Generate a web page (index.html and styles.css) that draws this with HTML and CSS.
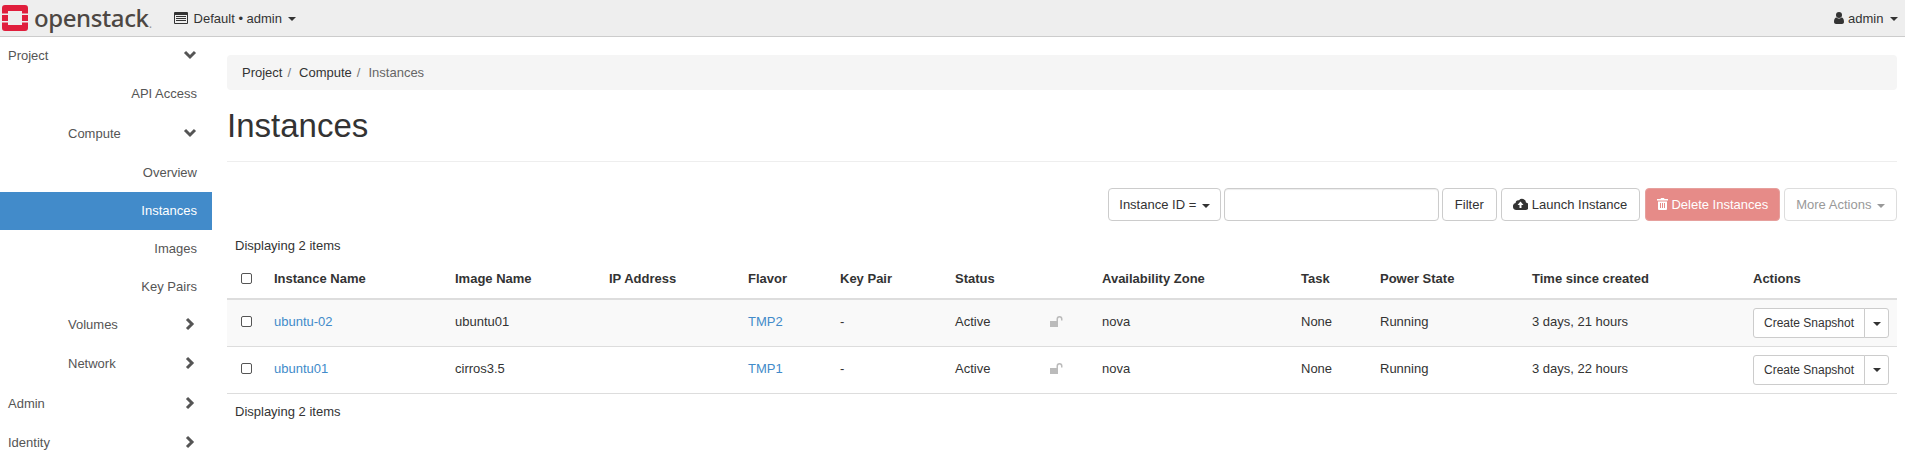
FILE: index.html
```html
<!DOCTYPE html>
<html lang="en">
<head>
    <meta charset="UTF-8">
    <title>Instances - OpenStack Dashboard</title>
    <link rel="stylesheet" href="styles.css">
</head>
<body>
    <header class="topbar">
        <a class="brand" href="#">
            <svg class="brand-mark" viewBox="0 0 26 26" width="26" height="26">
                <path fill="#e01e3c" d="M3 0h20a3 3 0 0 1 3 3v5.500h-6V6H6v2.500H0V3a3 3 0 0 1 3-3zM0 17.500h6V20h14v-2.500h6V23a3 3 0 0 1-3 3H3a3 3 0 0 1-3-3z"/>
                <rect fill="#e01e3c" x="0" y="10" width="6" height="6"/>
                <rect fill="#e01e3c" x="20" y="10" width="6" height="6"/>
            </svg>
            <span class="brand-name">openstack</span><span class="brand-dot">.</span>
        </a>
        <a class="context" href="#">
            <svg class="icon" viewBox="0 0 14 12" width="14" height="12">
                <path fill="#333" fill-rule="evenodd" d="M1 0h12a1 1 0 0 1 1 1v10a1 1 0 0 1-1 1H1a1 1 0 0 1-1-1V1a1 1 0 0 1 1-1zm0 3v8h12V3zm1 1h10v1H2zm0 2h10v1H2zm0 2h10v1H2z"/>
            </svg>
            Default &bull; admin <span class="caret"></span>
        </a>
        <a class="user" href="#">
            <svg class="icon" viewBox="0 0 10 12" width="10" height="12">
                <circle fill="#333" cx="5" cy="3" r="3"/>
                <path fill="#333" d="M0 10c0-3 1-4.500 2.500-4.500C3 6 4 6.500 5 6.500S7 6 7.500 5.500C9 5.500 10 7 10 10c0 1.300-1 2-2 2H2c-1 0-2-.7-2-2z"/>
            </svg>
            admin <span class="caret"></span>
        </a>
    </header>

    <div class="layout">
        <nav class="sidebar">
            <a class="nav-row nav-top nav-first" href="#"><span>Project</span><svg class="chev" viewBox="0 0 14 10" width="14" height="10"><path d="M2 2l5 5 5-5"/></svg></a>
            <a class="nav-row nav-leaf" href="#">API Access</a>
            <a class="nav-row nav-group nav-tall" href="#"><span>Compute</span><svg class="chev" viewBox="0 0 14 10" width="14" height="10"><path d="M2 2l5 5 5-5"/></svg></a>
            <a class="nav-row nav-leaf" href="#">Overview</a>
            <a class="nav-row nav-leaf nav-short active" href="#">Instances</a>
            <a class="nav-row nav-leaf nav-short" href="#">Images</a>
            <a class="nav-row nav-leaf nav-short" href="#">Key Pairs</a>
            <a class="nav-row nav-group nav-short" href="#"><span>Volumes</span><svg class="chev" viewBox="0 0 14 14" width="14" height="14"><path d="M4 2l5 5-5 5"/></svg></a>
            <a class="nav-row nav-group" href="#"><span>Network</span><svg class="chev" viewBox="0 0 14 14" width="14" height="14"><path d="M4 2l5 5-5 5"/></svg></a>
            <a class="nav-row nav-top nav-tall" href="#"><span>Admin</span><svg class="chev" viewBox="0 0 14 14" width="14" height="14"><path d="M4 2l5 5-5 5"/></svg></a>
            <a class="nav-row nav-top" href="#"><span>Identity</span><svg class="chev" viewBox="0 0 14 14" width="14" height="14"><path d="M4 2l5 5-5 5"/></svg></a>
        </nav>

        <main class="content">
            <ol class="breadcrumb">
                <li><a href="#">Project</a></li>
                <li><a href="#">Compute</a></li>
                <li class="current">Instances</li>
            </ol>

            <h1 class="page-title">Instances</h1>

            <div class="toolbar">
                <button class="btn" type="button">Instance ID = <span class="caret"></span></button>
                <input class="filter-input" type="text">
                <button class="btn btn-filter" type="button">Filter</button>
                <button class="btn btn-launch" type="button">
                    <svg class="icon" viewBox="0 0 15 12" width="15" height="12">
                        <path fill="#333" fill-rule="evenodd" d="M3.500 12A3.500 3.500 0 0 1 2.600 5.100 3 3 0 0 1 6 2.200 4 4 0 0 1 13 4.500a3.800 3.800 0 0 1-1 7.500zM7.500 3.500L4.500 7H6.500v3h2V7h2z"/>
                    </svg>
                    Launch Instance
                </button>
                <button class="btn btn-danger" type="button">
                    <svg class="icon" viewBox="0 0 11 12" width="11" height="12">
                        <path fill="#fff" fill-rule="evenodd" d="M3.500 1l.5-1h3l.5 1H11v1.500H0V1zM1 3.500h9V11a1 1 0 0 1-1 1H2a1 1 0 0 1-1-1zM3 5v5h1V5zm2 0v5h1V5zm2 0v5h1V5z"/>
                    </svg>
                    Delete Instances
                </button>
                <button class="btn btn-muted" type="button">More Actions <span class="caret"></span></button>
            </div>

            <p class="count count-top">Displaying 2 items</p>

            <table class="instances">
                <colgroup>
                    <col class="c-check"><col class="c-name"><col class="c-image"><col class="c-ip">
                    <col class="c-flavor"><col class="c-key"><col class="c-status"><col class="c-lock">
                    <col class="c-zone"><col class="c-task"><col class="c-power"><col class="c-time"><col class="c-actions">
                </colgroup>
                <thead>
                    <tr>
                        <th><span class="check"></span></th>
                        <th>Instance Name</th>
                        <th>Image Name</th>
                        <th>IP Address</th>
                        <th>Flavor</th>
                        <th>Key Pair</th>
                        <th>Status</th>
                        <th></th>
                        <th>Availability Zone</th>
                        <th>Task</th>
                        <th>Power State</th>
                        <th>Time since created</th>
                        <th>Actions</th>
                    </tr>
                </thead>
                <tbody>
                    <tr class="odd">
                        <td><span class="check"></span></td>
                        <td><a href="#">ubuntu-02</a></td>
                        <td>ubuntu01</td>
                        <td></td>
                        <td><a href="#">TMP2</a></td>
                        <td>-</td>
                        <td>Active</td>
                        <td><svg class="lock" viewBox="0 0 13 11" width="13" height="11"><path fill="#bbb" d="M0 5h8v6H0zM6.500 5V3a3 3 0 0 1 6 0v1.500h-1.500V3a1.500 1.500 0 0 0-3 0v2z"/></svg></td>
                        <td>nova</td>
                        <td>None</td>
                        <td>Running</td>
                        <td>3 days, 21 hours</td>
                        <td>
                            <div class="split">
                                <button class="btn" type="button">Create Snapshot</button>
                                <button class="btn btn-caret" type="button"><span class="caret"></span></button>
                            </div>
                        </td>
                    </tr>
                    <tr>
                        <td><span class="check"></span></td>
                        <td><a href="#">ubuntu01</a></td>
                        <td>cirros3.5</td>
                        <td></td>
                        <td><a href="#">TMP1</a></td>
                        <td>-</td>
                        <td>Active</td>
                        <td><svg class="lock" viewBox="0 0 13 11" width="13" height="11"><path fill="#bbb" d="M0 5h8v6H0zM6.500 5V3a3 3 0 0 1 6 0v1.500h-1.500V3a1.500 1.500 0 0 0-3 0v2z"/></svg></td>
                        <td>nova</td>
                        <td>None</td>
                        <td>Running</td>
                        <td>3 days, 22 hours</td>
                        <td>
                            <div class="split">
                                <button class="btn" type="button">Create Snapshot</button>
                                <button class="btn btn-caret" type="button"><span class="caret"></span></button>
                            </div>
                        </td>
                    </tr>
                </tbody>
            </table>

            <p class="count count-bottom">Displaying 2 items</p>
        </main>
    </div>
</body>
</html>
```
FILE: styles.css
```css
/* page */
html, body {
    height: 458px;
    overflow: hidden;
}

body {
    margin: 0;
    font-family: "Liberation Sans", Arial, sans-serif;
    font-size: 13px;
    color: #333;
    background-color: #fff;
}

a {
    color: inherit;
    text-decoration: none;
}

.icon {
    vertical-align: -1px;
}

.caret {
    display: inline-block;
    width: 0;
    height: 0;
    margin-left: 2px;
    vertical-align: middle;
    border-top: 4px solid;
    border-left: 4px solid transparent;
    border-right: 4px solid transparent;
}

/* top bar */
.topbar {
    display: flex;
    align-items: center;
    height: 36px;
    background-color: #eee;
    border-bottom: 1px solid #ccc;
}

.brand {
    display: flex;
    align-items: center;
    margin-left: 2px;
    width: 172px;
    color: #4d4743;
}

.brand-mark {
    flex: none;
    margin-right: 6px;
}

.brand-name {
    font-family: "Noto Sans", sans-serif;
    font-size: 24px;
    font-weight: 500;
    line-height: 30px;
    letter-spacing: -0.4px;
}

.brand-dot {
    font-size: 14px;
    color: #999;
    margin-top: 10px;
}

.context .icon {
    margin-right: 2px;
}

.user {
    margin-left: auto;
    margin-right: 7px;
}

.user .caret {
    margin-left: 3px;
}

/* side nav */
.layout {
    display: flex;
}

.sidebar {
    flex: none;
    width: 212px;
    color: #555;
}

.nav-row {
    display: flex;
    align-items: center;
    height: 39px;
    box-sizing: border-box;
    padding-bottom: 1px;
    padding-right: 15px;
}

.nav-first {
    height: 37px;
}

.nav-tall {
    height: 40px;
    padding-bottom: 0;
}

.nav-short {
    height: 38px;
    padding-bottom: 2px;
}

.nav-top {
    justify-content: space-between;
    padding-left: 8px;
}

.nav-group {
    justify-content: space-between;
    padding-left: 68px;
}

.nav-leaf {
    justify-content: flex-end;
}

.nav-leaf.active {
    background-color: #428bca;
    color: #fff;
}

.chev {
    flex: none;
    fill: none;
    stroke: #555;
    stroke-width: 3;
}

/* main area */
.content {
    flex: 1;
    min-width: 0;
    padding: 18px 8px 0 15px;
}

.breadcrumb {
    display: flex;
    height: 35px;
    align-items: center;
    margin: 0;
    padding: 0 15px;
    list-style: none;
    background-color: #f5f5f5;
    border-radius: 4px;
    color: #333;
}

.breadcrumb li + li::before {
    content: "/";
    padding: 0 8px 0 5px;
    color: #777;
}

.breadcrumb .current {
    color: #666;
}

.page-title {
    margin: 0;
    height: 71px;
    line-height: 71px;
    font-size: 33px;
    font-weight: normal;
    border-bottom: 1px solid #eee;
    color: #333;
}

/* filter and action buttons */
.toolbar {
    display: flex;
    justify-content: flex-end;
    gap: 3px;
    margin-top: 26px;
}

.btn {
    height: 33px;
    padding: 0 10px;
    font-family: inherit;
    font-size: 13px;
    color: #333;
    background-color: #fff;
    border: 1px solid #ccc;
    border-radius: 4px;
    white-space: nowrap;
}

.filter-input {
    width: 215px;
    height: 33px;
    box-sizing: border-box;
    border: 1px solid #ccc;
    border-radius: 4px;
    box-shadow: inset 0 1px 1px rgba(0, 0, 0, 0.075);
}

.btn-filter {
    padding: 0 12px;
}

.btn-launch {
    padding: 0 11.5px;
    margin-left: 1px;
}

.btn-danger {
    padding: 0 11px;
    color: #fff;
    background-color: #e68b88;
    border-color: #e6a09d;
    margin-left: 2px;
}

.btn-muted {
    padding: 0 11px;
    color: #999;
    border-color: #ddd;
    margin-left: 1px;
}

.count {
    margin: 0;
    padding-left: 8px;
    color: #333;
}

.count-top {
    margin-top: 17px;
}

.count-bottom {
    margin-top: 10px;
}

/* table */
.instances {
    width: 1670px;
    table-layout: fixed;
    border-collapse: collapse;
    margin-top: 6px;
}

.c-check { width: 39px; }
.c-name { width: 181px; }
.c-image { width: 154px; }
.c-ip { width: 139px; }
.c-flavor { width: 92px; }
.c-key { width: 115px; }
.c-status { width: 95px; }
.c-lock { width: 52px; }
.c-zone { width: 199px; }
.c-task { width: 79px; }
.c-power { width: 152px; }
.c-time { width: 221px; }
.c-actions { width: 152px; }

.instances th,
.instances td {
    padding: 0 8px;
    text-align: left;
    vertical-align: middle;
}

.instances th {
    height: 39px;
    font-weight: bold;
    border-bottom: 2px solid #ddd;
}

.instances td {
    height: 47px;
    padding-bottom: 2px;
    box-sizing: border-box;
    border-bottom: 1px solid #ddd;
}

.instances tr.odd td {
    background-color: #f9f9f9;
}

.instances td a {
    color: #428bca;
}

.check {
    display: block;
    width: 9px;
    height: 9px;
    margin-left: 6px;
    background-color: #fff;
    border: 1px solid #555;
    border-radius: 2px;
}

.lock {
    display: block;
}

.split {
    display: flex;
    justify-content: flex-end;
    margin-top: 2px;
}

.split .btn {
    height: 30px;
    font-size: 12px;
}

.split .btn:first-child {
    width: 112px;
    padding: 0;
    border-radius: 3px 0 0 3px;
}

.split .btn.btn-caret {
    width: 25px;
    padding: 0;
    margin-left: -1px;
    border-radius: 0 3px 3px 0;
}

.btn-caret .caret {
    margin-left: 0;
}
```
